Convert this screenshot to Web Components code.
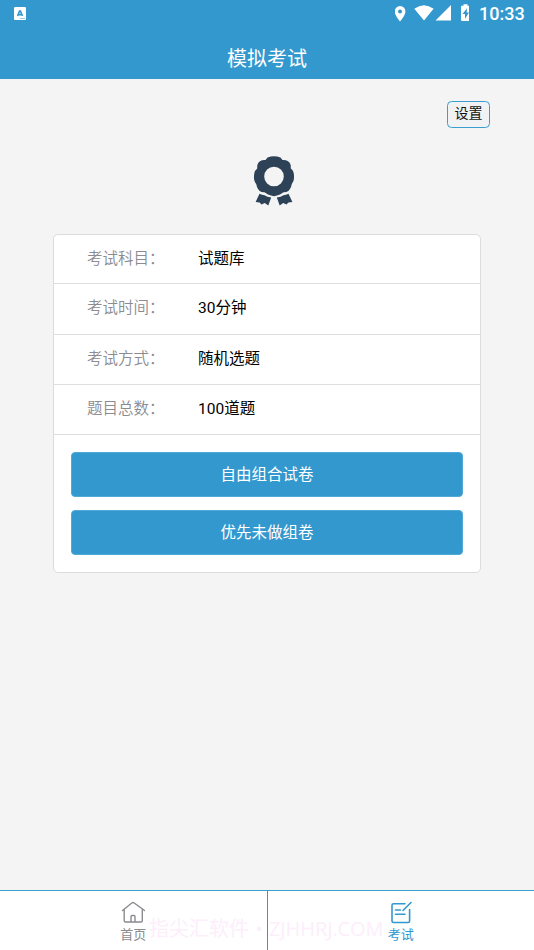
<!DOCTYPE html>
<html lang="zh-CN">
<head>
<meta charset="utf-8">
<title>模拟考试</title>
<style>
html,body{margin:0;height:100%}
body{background:#f4f4f4;font-family:Roboto,"Noto Sans CJK SC",sans-serif;overflow:hidden}
</style>
</head>
<body>
<exam-app></exam-app>
<script>
const define=(name,html)=>customElements.define(name,class extends HTMLElement{
  constructor(){super();this.attachShadow({mode:'open'}).innerHTML=html;}
});

define('status-bar',`<style>
:host{display:flex;height:27px;align-items:center;color:#fff;padding:0 10px 0 14px;box-sizing:border-box}
svg{display:block;flex:none}
.gap{flex:1}
.time{font-size:18px;line-height:28px;font-weight:500;width:45px;white-space:nowrap;margin-left:10px}
</style>
<svg width="12" height="13" viewBox="0 0 12 13"><rect width="12" height="13" rx="1" fill="#fff"/><path d="M3.600 9 5.500 4h1L8.400 9M4.300 7.600h3.400" fill="none" stroke="#3398ce" stroke-width="1.600"/><path d="M6 11.500h5" stroke="#9bcbe6"/></svg>
<span class="gap"></span>
<svg width="74" height="27" viewBox="0 0 74 27" fill="#fff"><path fill-rule="evenodd" d="M5 6a5.400 5.400 0 0 0-5.300 5.500C-.3 15.500 5 21.500 5 21.500s5.400-6 5.400-10A5.400 5.400 0 0 0 5 6zm0 3.400a2 2 0 1 1 0 4 2 2 0 0 1 0-4z"/><path d="M19.300 8.700Q29 1.700 38.600 8.700L29 20.500zM56 5v15.500H40.500z"/><path d="M66.500 5.800H68.500V4.300h4v1.500h2a1 1 0 0 1 1 1V20a1 1 0 0 1-1 1H67a1 1 0 0 1-1-1V6.800a1 1 0 0 1 .5-1z"/><path d="M72 8.300 67.500 14H70v4.800L74 12.600h-2.300z" fill="#3398ce"/></svg>
<span class="time">10:33</span>`);

define('title-bar',`<style>
:host{display:block;background:#3398ce;height:79px;color:#fff;box-sizing:border-box}
h1{margin:0;font-size:20px;font-weight:400;line-height:52px;height:52px;padding-top:6px;text-align:center;box-sizing:border-box}
</style><status-bar></status-bar><h1><slot></slot></h1>`);

define('settings-button',`<style>
:host{display:block;width:43px;height:27px;border:1.500px solid #3c9dcf;border-radius:4.500px;box-sizing:border-box;text-align:center;font-size:14px;line-height:23px;color:#111;background:#f0f2f3}
</style><slot></slot>`);

define('award-icon',`<style>:host{display:block;width:42px;height:50px}svg{display:block}</style>
<svg width="42" height="50" viewBox="0 0 42 50" fill="#2e4257"><path fill-rule="evenodd" d="M14.500 1.500Q21-.8 27.500 1.500L29.500 4Q36 3.600 37.700 9L37.800 12.500Q41.400 15 41 21 41.400 25 38.800 28L38 31Q36 36.500 30.500 36.200L27 38.500Q24 39.800 21 40.200 18 39.800 15 38.500L11.500 36.200Q6 36.500 4 31L3.200 28Q.6 25 1 21 .6 15 4.200 12.500L4.300 9Q6 3.600 12.500 4zM21 10.700a9.800 9.800 0 1 0 0 19.600 9.800 9.800 0 0 0 0-19.600z"/><path d="M6.500 37.800Q9 39 11.500 39.200 14 41.200 18.200 41.500L15.300 49.500 11.800 47 8.500 48.500 6.600 46.500 2.600 46zM35.500 37.800Q33 39 30.500 39.200 28 41.200 23.800 41.500L26.700 49.500 30.200 47 33.500 48.500 35.400 46.500 39.400 46z"/></svg>`);

define('info-row',`<style>
:host{display:flex;height:50px;box-sizing:border-box;border-bottom:1px solid #dedede;padding-left:33px;font-size:15.500px;line-height:48px;color:#000}
:host([first]){height:49px}
:host([tall]){height:51px}
.label{width:111px;color:#8b8b90;font-weight:350}
</style><span class="label"><slot name="label"></slot></span><slot></slot>`);

define('action-button',`<style>
:host{display:block;height:45px;background:#3398ce;border:1px solid #50a9d7;border-radius:4px;box-sizing:border-box;color:#fff;text-align:center;font-size:15.500px;line-height:44px}
</style><slot></slot>`);

define('exam-card',`<style>
:host{display:block;width:428px;height:339px;background:#fff;border:1px solid #dcdcdc;border-radius:5px;box-sizing:border-box}
.actions{display:grid;gap:13px;padding:17px}
</style><slot></slot><div class="actions"><slot name="action"></slot></div>`);

define('tab-item',`<style>
:host{display:flex;flex-direction:column;align-items:center;flex:1;box-sizing:border-box;padding-top:10px;color:#8b8b90;font-size:13px;line-height:18px}
:host([active]){color:#3398ce;border-left:1px solid #3398ce}
::slotted(svg){display:block;margin-bottom:1px}
</style><slot name="icon"></slot><span><slot></slot></span>`);

define('tab-bar',`<style>
:host{display:flex;position:relative;height:60px;box-sizing:border-box;border-top:1px solid #3c9dcf;background:#fff}
.mark{position:absolute;left:149px;top:24px;font-size:20px;line-height:28px;color:#fdeefb;white-space:nowrap;display:flex}
.dot{width:20px;text-align:center}
.site{font-family:"Open Sans",sans-serif;font-size:20px;letter-spacing:-.1px;line-height:27px;width:116px}
</style><div class="mark"><span>指尖汇软件</span><span class="dot">•</span><span class="site">ZJHHRJ.COM</span></div><slot></slot>`);

define('exam-app',`<style>
:host{display:flex;flex-direction:column;height:100vh}
main{flex:1;display:flex;flex-direction:column;align-items:center}
settings-button{align-self:flex-end;margin:22px 44px 0 0}
award-icon{margin:28px 0 0 13px}
exam-card{margin-top:28px}
</style>
<title-bar>模拟考试</title-bar>
<main>
<settings-button>设置</settings-button>
<award-icon></award-icon>
<exam-card>
<info-row first><span slot="label">考试科目：</span>试题库</info-row>
<info-row tall><span slot="label">考试时间：</span>30分钟</info-row>
<info-row><span slot="label">考试方式：</span>随机选题</info-row>
<info-row><span slot="label">题目总数：</span>100道题</info-row>
<action-button slot="action">自由组合试卷</action-button>
<action-button slot="action">优先未做组卷</action-button>
</exam-card>
</main>
<tab-bar>
<tab-item><svg slot="icon" width="24" height="24" viewBox="0 0 24 24" fill="none" stroke="currentColor" stroke-width="1.400" stroke-linejoin="round" stroke-linecap="round"><path d="M1.500 9.500 10.800 2Q12 1 13.200 2L23.500 9.500M3.200 8.500v11Q3.200 21 4.700 21h15.100Q21.300 21 21.300 19.500V8.500M10 21v-5.300q0-1.200 1-1.200h2q1 0 1 1.200V21"/></svg>首页</tab-item>
<tab-item active><svg slot="icon" width="24" height="24" viewBox="0 0 24 24" fill="none" stroke="currentColor" stroke-width="1.600" stroke-linecap="round"><path d="M16 2.800H4.500Q3 2.800 3 4.300V20q0 1.500 1.500 1.500h14.600q1.500 0 1.500-1.500V8.500M22 1.500 14 9.500M6.500 9h5M6.500 13.300h9.500"/></svg>考试</tab-item>
</tab-bar>`);
</script>
</body>
</html>
